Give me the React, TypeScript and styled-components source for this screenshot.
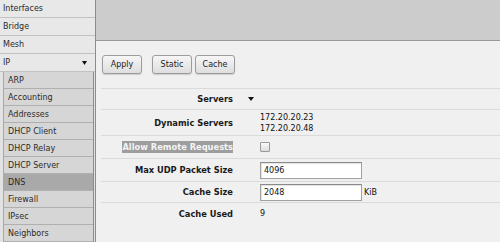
import styled, { createGlobalStyle } from "styled-components";

const GlobalStyle = createGlobalStyle`
  html, body {
    margin: 0;
    padding: 0;
  }
  body {
    background: #f0f0f0;
    font-family: "DejaVu Sans", Verdana, sans-serif;
    color: #222;
  }
`;

const topMenu = ["Interfaces", "Bridge", "Mesh", "IP"];
const subMenu = [
  "ARP",
  "Accounting",
  "Addresses",
  "DHCP Client",
  "DHCP Relay",
  "DHCP Server",
  "DNS",
  "Firewall",
  "IPsec",
  "Neighbors",
];

const Caret = ({ w = 6, h = 4 }: { w?: number; h?: number }) => (
  <svg width={w} height={h} viewBox={`0 0 ${w} ${h}`}>
    <polygon points={`0,0 ${w},0 ${w / 2},${h}`} fill="#111" />
  </svg>
);

export default function App() {
  return (
    <>
      <GlobalStyle />
      <Page>
        <Sidebar>
          {topMenu.map((name) => (
            <TopItem key={name}>
              <span>{name}</span>
              {name === "IP" && <Caret w={5} h={4} />}
            </TopItem>
          ))}
          <SubList>
            {subMenu.map((name) => (
              <SubItem key={name} $active={name === "DNS"}>
                {name}
              </SubItem>
            ))}
          </SubList>
        </Sidebar>
        <Main>
          <Header />
          <Toolbar>
            <Button>Apply</Button>
            <Group>
              <Button>Static</Button>
              <Button>Cache</Button>
            </Group>
          </Toolbar>
          <Form>
            <Row $h={21}>
              <Label>Servers</Label>
              <Marker>
                <Caret />
              </Marker>
            </Row>
            <Row $h={26}>
              <Label>Dynamic Servers</Label>
              <span />
              <Value>
                <div>172.20.20.23</div>
                <div>172.20.20.48</div>
              </Value>
            </Row>
            <Row $h={23}>
              <Label>
                <Selected>Allow Remote Requests</Selected>
              </Label>
              <span />
              <Value $inline>
                <Checkbox />
              </Value>
            </Row>
            <Row $h={23}>
              <Label>Max UDP Packet Size</Label>
              <span />
              <Value $inline>
                <Input defaultValue="4096" />
              </Value>
            </Row>
            <Row $h={21}>
              <Label>Cache Size</Label>
              <span />
              <Value $inline>
                <Input defaultValue="2048" />
                <Unit>KiB</Unit>
              </Value>
            </Row>
            <Row $h={22}>
              <Label>Cache Used</Label>
              <span />
              <Value>9</Value>
            </Row>
          </Form>
        </Main>
      </Page>
    </>
  );
}

const Page = styled.div`
  display: flex;
  width: 500px;
  height: 242px;
  overflow: hidden;
`;

const Sidebar = styled.nav`
  width: 95px;
  flex: none;
  display: flex;
  flex-direction: column;
  background: #e2e2e2;
  border-right: 1px solid #8c8c8c;
  font-size: 8px;
  color: #2a2a2a;
`;

const TopItem = styled.div`
  flex: 1 0 0;
  display: flex;
  align-items: center;
  justify-content: space-between;
  padding: 0 8px 0 3px;
  background: #e8e8e8;
  border-bottom: 1px solid #c2c2c2;
`;

const SubList = styled.div`
  flex: 10 0 0;
  display: flex;
  flex-direction: column;
  margin: 0 1px 0 3px;
  border-left: 1px solid #a8a8a8;
  border-right: 1px solid #8c8c8c;
`;

const SubItem = styled.div<{ $active?: boolean }>`
  flex: 1 0 0;
  display: flex;
  align-items: center;
  padding-left: 4px;
  background: ${(p) => (p.$active ? "#a9a9a9" : "#d6d6d6")};
  border-bottom: 1px solid #b0b0b0;
`;

const Main = styled.main`
  flex: 1;
  display: flex;
  flex-direction: column;
  min-width: 0;
`;

const Header = styled.header`
  height: 40px;
  flex: none;
  background: #cccccc;
  border-bottom: 1px solid #999;
`;

const Toolbar = styled.div`
  display: flex;
  gap: 10px;
  padding: 14px 0 14px 6px;
`;

const Group = styled.div`
  display: flex;
  gap: 3px;
`;

const Button = styled.button`
  width: 40px;
  height: 19px;
  padding: 0;
  font-family: "DejaVu Sans", Verdana, sans-serif;
  font-size: 8px;
  color: #222;
  background: linear-gradient(#f6f6f6, #dedede);
  border: 1px solid #9c9c9c;
  border-radius: 3px;
  box-shadow: 0 1px 1px rgba(0, 0, 0, 0.15);
`;

const Form = styled.div`
  margin-left: 5px;
`;

const Row = styled.div<{ $h: number }>`
  display: grid;
  grid-template-columns: 132px 27px 1fr;
  align-items: center;
  height: ${(p) => p.$h}px;
  box-sizing: border-box;
  border-top: 1px solid #dadada;
  font-size: 8px;
`;

const Label = styled.div`
  text-align: right;
  font-weight: bold;
  font-size: 8.3px;
  color: #1a1a1a;
`;

const Marker = styled.div`
  display: flex;
  padding-left: 15px;
`;

const Value = styled.div<{ $inline?: boolean }>`
  display: flex;
  flex-direction: ${(p) => (p.$inline ? "row" : "column")};
  align-items: ${(p) => (p.$inline ? "center" : "flex-start")};
  justify-content: flex-start;
  line-height: 11px;
  color: #111;
`;

const Selected = styled.span`
  background: #9e9e9e;
  color: #f4f4f4;
  padding: 1px 0;
`;

const Checkbox = styled.span`
  display: block;
  width: 8px;
  height: 8px;
  border: 1px solid #9a9a9a;
  border-radius: 1px;
  background: linear-gradient(#fafafa, #dcdcdc);
`;

const Input = styled.input`
  width: 102px;
  height: 17px;
  margin: 0;
  box-sizing: border-box;
  padding: 0 3px;
  font-family: "DejaVu Sans", Verdana, sans-serif;
  font-size: 8px;
  color: #111;
  background: #fff;
  border: 1px solid #a0a0a0;
  border-top-color: #8a8a8a;
  box-shadow: inset 1px 1px 1px rgba(0, 0, 0, 0.12);
  outline: none;
`;

const Unit = styled.span`
  margin-left: 2px;
`;
